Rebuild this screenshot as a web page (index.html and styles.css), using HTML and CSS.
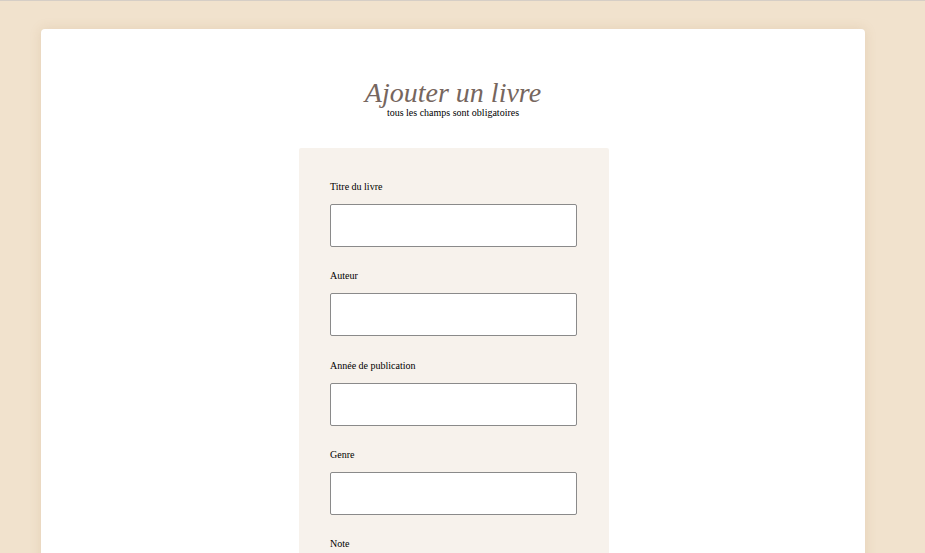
FILE: index.html
```html
<!DOCTYPE html>
<html lang="fr">
<head>
<meta charset="utf-8">
<title>Ajouter un livre</title>
<link rel="stylesheet" href="styles.css">
</head>
<body>
<main class="card">
  <header class="head">
    <h1 class="title">Ajouter un livre</h1>
    <p class="subtitle">tous les champs sont obligatoires</p>
  </header>
  <form class="form">
    <div class="field">
      <label class="label" for="titre">Titre du livre</label>
      <input class="input" id="titre" type="text">
    </div>
    <div class="field">
      <label class="label" for="auteur">Auteur</label>
      <input class="input" id="auteur" type="text">
    </div>
    <div class="field">
      <label class="label" for="annee">Année de publication</label>
      <input class="input" id="annee" type="text">
    </div>
    <div class="field">
      <label class="label" for="genre">Genre</label>
      <input class="input" id="genre" type="text">
    </div>
    <div class="field">
      <label class="label" for="note">Note</label>
      <input class="input" id="note" type="text">
    </div>
  </form>
</main>
</body>
</html>
```
FILE: styles.css
```css
html, body {
  margin: 0;
  padding: 0;
}
body {
  background: #f1e2cd;
  border-top: 1px solid #d6cec6;
  font-family: "Liberation Serif", "Times New Roman", serif;
  color: #000;
  padding: 28px 0 40px 41px;
}
.card {
  width: 824px;
  background: #fff;
  border-radius: 4px;
  box-shadow: 0 0 12px rgba(170, 130, 80, 0.18);
  padding-top: 50px;
  display: flex;
  flex-direction: column;
  align-items: center;
}
.head {
  text-align: center;
  margin-bottom: 29px;
}
.title {
  margin: 0;
  font-size: 28px;
  font-style: italic;
  font-weight: normal;
  line-height: 28px;
  color: #76665e;
}
.subtitle {
  margin: 0;
  font-size: 10px;
  line-height: 12px;
}
.form {
  width: 248px;
  margin-left: 2px;
  background: #f7f2ec;
  padding: 33px 31px 20px 31px;
  border-radius: 2px;
  display: flex;
  flex-direction: column;
  gap: 23.3px;
}
.field {
  display: flex;
  flex-direction: column;
  gap: 11px;
}
.label {
  font-size: 10px;
  line-height: 12px;
}
.input {
  box-sizing: border-box;
  width: 247px;
  height: 43px;
  margin: 0;
  border: 1px solid #8a8a8a;
  border-radius: 2px;
  background: #fff;
  padding: 4px 8px;
}
```
